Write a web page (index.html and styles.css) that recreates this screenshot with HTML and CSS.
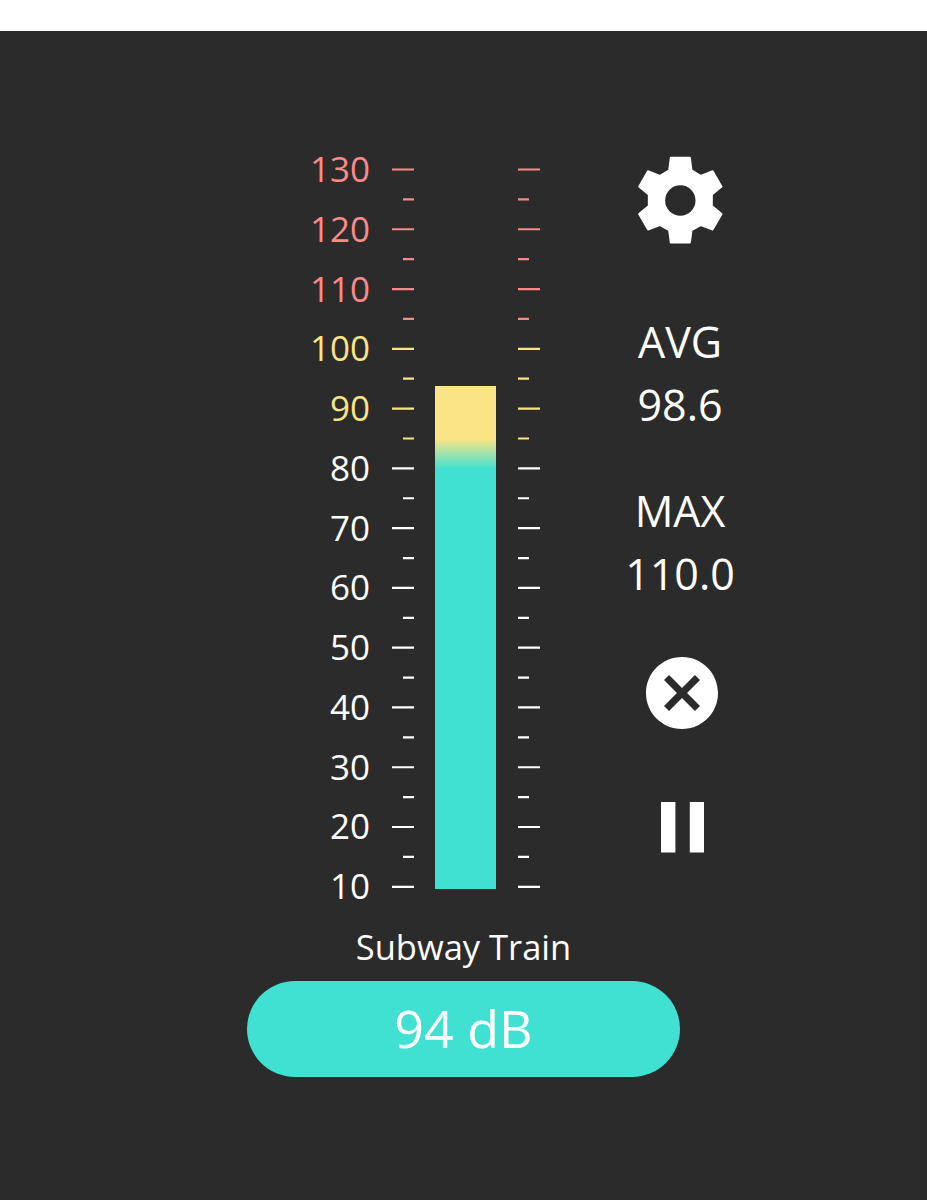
FILE: index.html
```html
<!DOCTYPE html>
<html lang="en">
<head>
<meta charset="utf-8">
<title>Sound Meter</title>
<link rel="stylesheet" href="styles.css">
</head>
<body>
<main class="app">
  <section class="meter">
    <div class="labels">
      <span class="danger">130</span><span class="danger">120</span><span class="danger">110</span>
      <span class="warn">100</span><span class="warn">90</span>
      <span>80</span><span>70</span><span>60</span><span>50</span><span>40</span><span>30</span><span>20</span><span>10</span>
    </div>
    <svg class="ticks" viewBox="0 0 22 720">
      <g class="tick-danger"><path class="minor" d="M16.5 .4V168"/><path class="major" d="M5.5 .4V168"/></g>
      <g class="tick-warn"><path class="minor" d="M16.5 179.72V285"/><path class="major" d="M5.5 179.72V285"/></g>
      <g class="tick-safe"><path class="minor" d="M16.5 299.27V720"/><path class="major" d="M5.5 299.27V720"/></g>
    </svg>
    <div class="bar"></div>
    <svg class="ticks right" viewBox="0 0 22 720">
      <g class="tick-danger"><path class="minor" d="M16.5 .4V168"/><path class="major" d="M5.5 .4V168"/></g>
      <g class="tick-warn"><path class="minor" d="M16.5 179.72V285"/><path class="major" d="M5.5 179.72V285"/></g>
      <g class="tick-safe"><path class="minor" d="M16.5 299.27V720"/><path class="major" d="M5.5 299.27V720"/></g>
    </svg>
    <aside class="panel">
      <svg class="gear" viewBox="50 46 260 266">
        <path d="M151 51H209L214 89L241 105L277 91L304 138L275 162V196L304 220L277 267L241 254L214 269L209 306H151L146 269L119 254L83 267L56 220L85 196V162L56 138L83 91L119 105L146 89Z"/>
        <circle cx="180" cy="179.5" r="45.5"/>
      </svg>
      <div class="stat"><span>AVG</span><span>98.6</span></div>
      <div class="stat max"><span>MAX</span><span>110.0</span></div>
      <svg class="cancel" viewBox="2 2 20 20"><path d="M12 2C6.47 2 2 6.47 2 12s4.47 10 10 10 10-4.47 10-10S17.53 2 12 2zm5 13.59L15.59 17 12 13.41 8.41 17 7 15.59 10.59 12 7 8.41 8.41 7 12 10.59 15.59 7 17 8.41 13.41 12 17 15.59z"/></svg>
      <svg class="pause" viewBox="6 5 12 14"><path d="M6 19h4V5H6v14zm8-14v14h4V5h-4z"/></svg>
    </aside>
  </section>
  <p class="caption">Subway Train</p>
  <div class="reading">94 dB</div>
</main>
</body>
</html>
```

FILE: styles.css
```css
* { box-sizing: border-box; }
body {
  margin: 0;
  background: #fff;
  color: #fff;
  font-family: "Noto Sans", "Open Sans", sans-serif;
}
.app {
  height: 1169px;
  margin-top: 31px;
  padding-top: 109px;
  background: #2b2b2b;
  display: flex;
  flex-direction: column;
  align-items: center;
  overflow: hidden;
}
.meter {
  width: 927px;
  height: 777px;
  display: flex;
  align-items: flex-start;
}
.labels {
  width: 370px;
  margin-top: -1px;
  display: flex;
  flex-direction: column;
  text-align: right;
  font-family: "Open Sans", sans-serif;
  font-size: 35px;
}
.labels span {
  height: 59.77px;
  line-height: 59.77px;
}
.labels .danger { color: #fa8a8a; }
.labels .warn { color: #fbe486; }
.ticks {
  width: 22px;
  height: 720px;
  margin: 28px 0 0 22px;
}
.ticks.right {
  margin-left: 21.5px;
  transform: scaleX(-1);
}
.ticks path { stroke-width: 11; }
.minor { stroke-dasharray: 2.2 27.687; }
.major { stroke-dasharray: 2.2 57.573; }
.tick-danger { stroke: #fa8a8a; }
.tick-warn { stroke: #fbe486; }
.tick-safe { stroke: #fff; }
.bar {
  width: 61px;
  height: 503px;
  margin: 246px 0 0 21px;
  background: linear-gradient(#fbe486 53px, #40e1d2 83px);
}
.panel {
  width: 140px;
  margin: 16px 0 0 70.5px;
  display: flex;
  flex-direction: column;
  align-items: center;
  fill: #fff;
}
.gear {
  width: 86.67px;
  height: 88.67px;
}
.gear path {
  stroke: #fff;
  stroke-width: 5;
  stroke-linejoin: round;
}
.gear circle { fill: #2b2b2b; }
.stat {
  margin-top: 65.33px;
  display: flex;
  flex-direction: column;
  align-items: center;
  font-family: "Open Sans", sans-serif;
  font-size: 43px;
  line-height: 63px;
}
.stat.max { margin-top: 43px; }
.cancel {
  width: 72px;
  height: 72px;
  margin: 52.3px 0 0 4px;
}
.pause {
  width: 43.2px;
  height: 50.4px;
  margin: 73px 0 0 5px;
}
.caption {
  margin: 6px 0 0;
  font-family: "Open Sans", sans-serif;
  font-size: 34.5px;
  line-height: 48px;
}
.reading {
  width: 433px;
  height: 95.5px;
  margin-top: 10px;
  border-radius: 48px;
  background: #40e1d2;
  text-align: center;
  font-family: "Open Sans", sans-serif;
  font-size: 52px;
  line-height: 94px;
}
```
